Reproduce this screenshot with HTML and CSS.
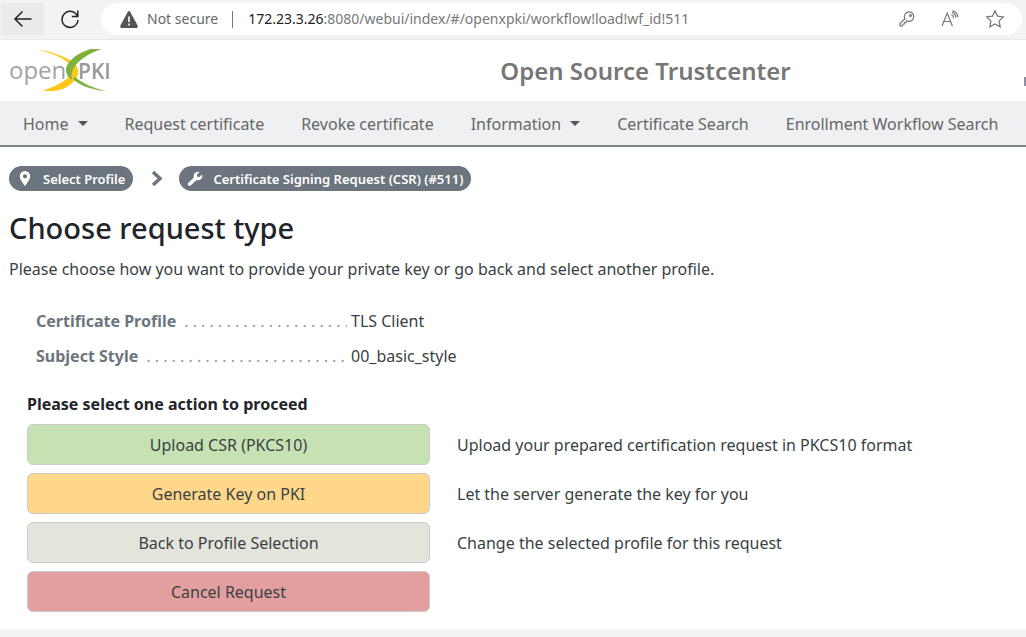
FILE: index.html
```
<!DOCTYPE html>
<html lang="en">
<head>
    <meta charset="UTF-8">
    <meta name="viewport" content="width=device-width, initial-scale=1.0">
    <title>Open Source Trustcenter</title>
    <link rel="stylesheet" href="styles.css">
</head>
<body>

    <div class="toolbar">
        <button class="tool back" aria-label="Back">
            <svg width="20" height="20" viewBox="0 0 20 20"><path d="M18.500 10H2M9.500 2.500L2 10l7.500 7.500"/></svg>
        </button>
        <button class="tool reload" aria-label="Reload">
            <svg width="20" height="20" viewBox="0 0 20 20"><path d="M17.500 7.500A8 8 0 1 0 18 11M17.800 1.500v6h-6"/></svg>
        </button>
        <div class="address">
            <svg class="warning" width="18" height="17" viewBox="0 0 18 17"><path d="M7.700 1Q9-.8 10.300 1L17.600 14.500Q18 17 16.500 17H1.500Q0 17 .4 14.500z" fill="#555"/><path d="M9 5.500v5.500M9 12.500v2" stroke="#fff" stroke-width="1.600"/></svg>
            <span class="insecure">Not secure</span>
            <span class="divider"></span>
            <span class="url"><b>172.23.3.26</b>:8080/webui/index/#/openxpki/workflow!load!wf_id!511</span>
            <div class="address-icons">
                <button aria-label="Saved passwords">
                    <svg width="16" height="16" viewBox="0 0 16 16"><path d="M6 8A4.700 4.700 0 1 1 9 10.200L7.800 9.800 7 11.500H5.500V13H4l-.8 1.800H1V12.300L6.200 7.500z"/><circle cx="11.500" cy="4.500" r=".9"/></svg>
                </button>
                <button aria-label="Read aloud">
                    <svg width="18" height="18" viewBox="0 0 18 18"><path d="M1 16L6.200 3l5.200 13M2.800 11.500h6.800M10.500 4.500q2 1.200 2.300 4M11 2q3.300 1.500 4.200 5.500M11.500.5Q16 2 17 7"/></svg>
                </button>
                <button aria-label="Add to favorites">
                    <svg width="20" height="20" viewBox="0 0 20 20"><path d="M10 1.800l2.500 5.300 5.900.8-4.300 4 1.100 5.900L10 15l-5.200 2.800 1.100-5.900-4.300-4 5.900-.8z"/></svg>
                </button>
            </div>
        </div>
    </div>

    <header class="header">
        <a href="#" class="logo" aria-label="OpenXPKI">
            <svg width="102" height="44" viewBox="0 0 102 44">
                <text class="logo-open" x="0" y="30">open</text>
                <text class="logo-pki" x="69" y="30">PKI</text>
                <path d="M28 0C44 3 58 8 65 14C72 21 70 29 62 35C56 40 49 42 43 42H33C46 38 61 30 63 23C65 12 45 5 28 0z" fill="#fcc81b"/>
                <path d="M92 0H82C68 4 57 13 57 21C57 26 60 29 63 31C61 22 66 10 92 0z" fill="#80b23b"/>
                <path d="M64 30C70 36 82 41 97 42C84 39 73 34 66 28z" fill="#80b23b"/>
            </svg>
        </a>
        <div class="site-title">Open Source Trustcenter</div>
        <span class="scroll-mark"></span>
    </header>

    <nav class="navbar">
        <a href="#" class="dropdown">Home</a>
        <a href="#">Request certificate</a>
        <a href="#">Revoke certificate</a>
        <a href="#" class="dropdown">Information</a>
        <a href="#">Certificate Search</a>
        <a href="#">Enrollment Workflow Search</a>
    </nav>

    <main class="content">
        <div class="breadcrumbs">
            <a href="#" class="badge">
                <svg width="16" height="16" viewBox="0 0 16 16"><path fill-rule="evenodd" d="M8 0a5.200 5.200 0 0 0-5.200 5.200C2.800 8.500 6 12 8 15c2-3 5.200-6.500 5.200-9.800A5.200 5.200 0 0 0 8 0zm0 3.200a2.100 2.100 0 1 1 0 4.200 2.100 2.100 0 0 1 0-4.200z"/></svg>
                Select Profile
            </a>
            <svg class="chevron" width="12" height="16" viewBox="0 0 12 16"><path d="M2 1l7 6.500-7 6.500"/></svg>
            <a href="#" class="badge">
                <svg width="16" height="16" viewBox="0 0 16 16"><path d="M15 3.500L12.500 6 10.300 5.700 10 3.500 12.500 1C10 .2 7 1.500 6.700 4.500q-.1 1 .2 1.900L1.200 12q-.8 1.200 0 2.200t2.500.3L9.600 8.900C13 10 16.500 7 15 3.500z"/></svg>
                Certificate Signing Request (CSR) (#511)
            </a>
        </div>

        <h1>Choose request type</h1>
        <p class="intro">Please choose how you want to provide your private key or go back and select another profile.</p>

        <dl class="fields">
            <div class="field">
                <dt>Certificate Profile</dt>
                <dd>TLS Client</dd>
            </div>
            <div class="field">
                <dt>Subject Style</dt>
                <dd>00_basic_style</dd>
            </div>
        </dl>

        <section class="actions">
            <h2>Please select one action to proceed</h2>
            <div class="action">
                <button class="btn green">Upload CSR (PKCS10)</button>
                <span>Upload your prepared certification request in PKCS10 format</span>
            </div>
            <div class="action">
                <button class="btn yellow">Generate Key on PKI</button>
                <span>Let the server generate the key for you</span>
            </div>
            <div class="action">
                <button class="btn grey">Back to Profile Selection</button>
                <span>Change the selected profile for this request</span>
            </div>
            <div class="action">
                <button class="btn red">Cancel Request</button>
            </div>
        </section>
    </main>

</body>
</html>
```

FILE: styles.css
```
* { box-sizing: border-box; }
body { margin: 0; background: #f3f3f3; color: #3a3f43; font: 16px/24px "Noto Sans", "Open Sans", sans-serif; }
button { border: 0; padding: 0; background: none; font: inherit; color: inherit; }
a { color: inherit; text-decoration: none; }
svg { display: block; flex: none; }

/* browser bar */
.toolbar { display: flex; align-items: center; height: 39px; padding: 0 4px 1px 1px; background: #f3f3f3; }
.tool { display: flex; align-items: center; justify-content: center; height: 32px; }
.tool path { fill: none; stroke: #222; stroke-width: 1.5; }
.back { width: 43px; background: #ebebeb; }
.reload { width: 52px; }
.address { display: flex; flex: 1; align-items: center; height: 32px; margin-left: 5px; padding: 0 17px 0 19px; border-radius: 16px; background: #fff; color: #777; font-size: 14px; white-space: nowrap; }
.insecure { margin-left: 9px; color: #666; }
.divider { width: 1px; height: 17px; margin: 0 15px 0 14px; background: #777; }
.url b { color: #222; font-weight: normal; }
.address-icons { display: flex; align-items: center; gap: 26px; margin-left: auto; }
.address-icons svg { fill: none; stroke: #777; stroke-width: 1.2; }

.header { display: grid; grid-template-columns: 1fr auto 1fr; align-items: center; height: 62px; padding-left: 9px; border-top: 1px solid #eaeaea; background: #fff; }
.logo { justify-self: start; }
.logo-open { font: 400 24px "Open Sans", sans-serif; fill: #a3a3a3; }
.logo-pki { font: 600 21px "Open Sans", sans-serif; fill: #999; }
.site-title { padding-left: 256px; color: #777; font-size: 24px; font-weight: 600; line-height: 32px; }
.scroll-mark { justify-self: end; width: 2px; height: 9px; margin-top: 22px; background: #8b90a0; }

.navbar { display: flex; gap: 37px; height: 46px; padding: 11px 23px 0; border-bottom: 2px solid #7b828b; background: #eff0f2; color: #666; white-space: nowrap; }
.dropdown::after { content: ""; display: inline-block; margin-left: 9px; vertical-align: 4px; border: 5px solid transparent; border-top-color: #555; border-bottom: 0; }

.content { padding: 19px 9px 17px; background: #fff; }
.breadcrumbs { display: flex; align-items: center; }
.badge { display: flex; align-items: center; gap: 10px; height: 25px; padding: 0 8px; border-radius: 13px; background: #6c757d; color: #fff; font-size: 13px; font-weight: 600; }
.badge svg { fill: #fff; }
.chevron { margin: 0 16px 0 18px; }
.chevron path { fill: none; stroke: #6c757d; stroke-width: 3.5; }

h1 { margin: 20px 0 0; color: #212529; font-size: 29px; font-weight: 500; line-height: 34px; }
.intro { margin: 12px 0 0; }

.fields { margin: 28px 0 0; padding-left: 27px; }
.field { display: flex; margin-bottom: 11px; }
.field dt { display: flex; width: 311px; overflow: hidden; color: #6c757d; font-weight: 700; white-space: nowrap; }
.field dt::after { content: ". . . . . . . . . . . . . . . . . . . . . . . . . . . . . ."; flex: 1; overflow: hidden; margin-left: 8px; color: #999; font-weight: 400; }
.field dd { margin: 0 0 0 4px; }

.actions { margin-top: 24px; padding-left: 18px; }
h2 { margin: 0 0 8px; color: #212529; font-size: 16px; font-weight: 700; line-height: 24px; }
.action { display: flex; align-items: center; margin-bottom: 8px; }
.action:last-child { margin-bottom: 0; }
.action span { margin-left: 27px; }
.btn { width: 403px; height: 41px; padding-top: 1px; border: 1px solid #cccbc7; border-radius: 6px; }
.green { background: #c7e2b2; }
.yellow { background: #ffd78a; }
.grey { background: #e3e4db; }
.red { background: #e39f9f; }
```
